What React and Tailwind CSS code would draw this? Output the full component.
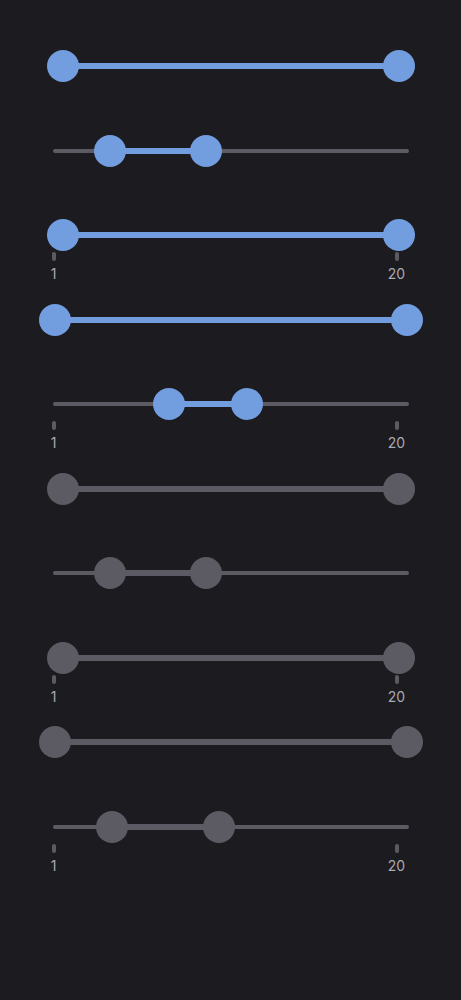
import React from "react";

// positions in px from the track's left edge
const sliders = [
  { kind: "wide", thumbs: [0, 336], color: "blue" },
  { kind: "thin", thumbs: [57.5, 153.5], color: "blue" },
  { kind: "wide", thumbs: [0, 336], color: "blue", ticks: true },
  { kind: "full", thumbs: [0, 352], color: "blue" },
  { kind: "thin", thumbs: [116.5, 194.5], color: "blue", ticks: true },
  { kind: "wide", thumbs: [0, 336], color: "gray" },
  { kind: "thin", thumbs: [57.5, 153.5], color: "gray" },
  { kind: "wide", thumbs: [0, 336], color: "gray", ticks: true },
  { kind: "full", thumbs: [0, 352], color: "gray" },
  { kind: "thin", thumbs: [59.5, 166.5], color: "gray", ticks: true },
];

const widths = { wide: 336, thin: 356, full: 352 };

const RangeSlider = ({ kind, thumbs, color, ticks }) => {
  const width = widths[kind];
  const fill = color === "blue" ? "bg-[#729ddf]" : "bg-[#5c5b63]";
  const [a, b] = thumbs;
  // ticks sit at the same page x for every variant
  const left = (461 - width) / 2;
  const t1 = 53.5 - left;
  const t2 = 396.5 - left;

  return (
    <div className="h-[84.5px] flex items-center justify-center">
      <div className="relative h-[32px] flex items-center" style={{ width }}>
        {kind === "thin" && (
          <div className="w-full h-[4px] rounded-full bg-[#5c5b63]" />
        )}
        <div
          className={`absolute top-1/2 -translate-y-1/2 h-[6px] ${fill}`}
          style={{ left: a, width: b - a }}
        />
        {thumbs.map((x, i) => (
          <div
            key={i}
            className={`absolute top-0 w-[32px] h-[32px] -ml-[16px] rounded-full ${fill}`}
            style={{ left: x }}
          />
        ))}
        {ticks &&
          [
            [t1, "1"],
            [t2, "20"],
          ].map(([x, label]) => (
            <div
              key={label}
              className="absolute top-[33px] w-[30px] -ml-[15px] flex flex-col items-center"
              style={{ left: x }}
            >
              <div className="w-[4px] h-[9px] rounded-full bg-[#5c5b63]" />
              <span className="mt-[4px] text-[14px] leading-[18px] text-[#a9a8ae] font-['Inter',sans-serif]">
                {label}
              </span>
            </div>
          ))}
      </div>
    </div>
  );
}

export default function App() {
  return (
    <div className="min-h-screen w-full bg-[#1c1b20] pt-[24px]">
      {sliders.map((s, i) => (
        <RangeSlider key={i} {...s} />
      ))}
    </div>
  );
}
